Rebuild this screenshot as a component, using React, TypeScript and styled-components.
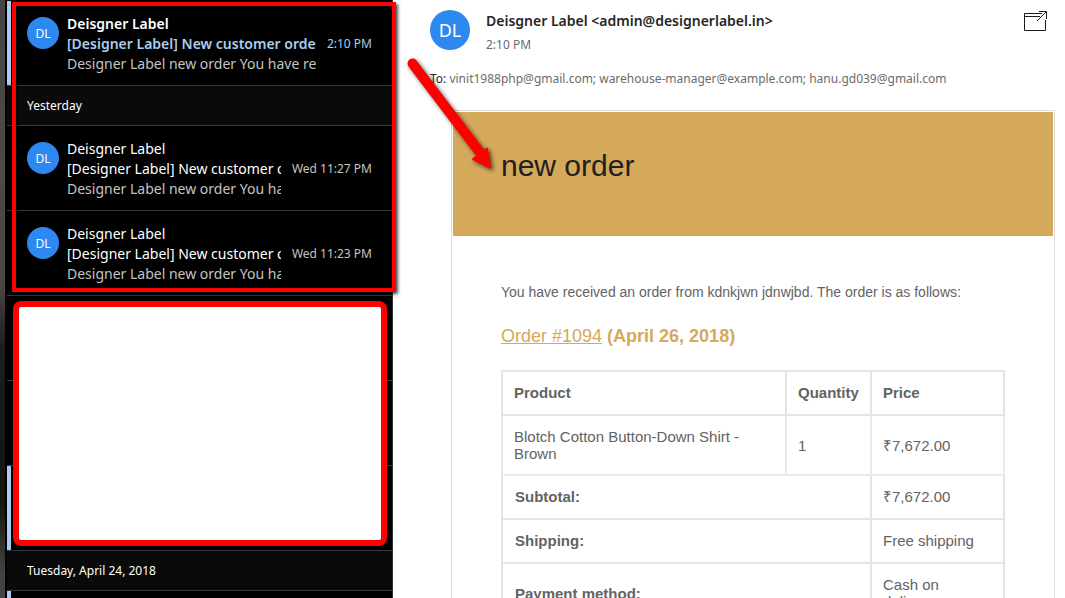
import React from "react";
import styled, { createGlobalStyle } from "styled-components";

const UI_FONT = '"Noto Sans", "Open Sans", sans-serif';
const MAIL_FONT = '"Liberation Sans", Arial, sans-serif';

const GlobalStyle = createGlobalStyle`
  *, *::before, *::after { box-sizing: border-box; }
  body { margin: 0; background: #fff; font-family: ${UI_FONT}; }
`;

const Shell = styled.div`
  position: relative;
  display: flex;
  height: 100vh;
  overflow: hidden;
`;

const Backdrop = styled.div`
  flex: 0 0 7px;
  border-right: 2px solid #000;
  background: linear-gradient(#454545, #504844 30%, #4a4442 48%, #1c1e20 58%, #141818 75%, #15160f 84%, #444 96%);
`;

const Sidebar = styled.nav`
  flex: 0 0 386px;
  padding-top: 1px;
  background: #000;
  border-right: 1px solid #333;
  overflow: hidden;
`;

const MessageList = styled.ul`
  margin: 0;
  padding: 0;
  list-style: none;
`;

const DateHeader = styled.h2`
  margin: 0;
  padding: 0 20px;
  height: 40px;
  line-height: 39px;
  border-bottom: 1px solid #383838;
  background: #0a0a0a;
  color: #fff;
  font-size: 12px;
  font-weight: 400;
`;

const Row = styled.a<{ $unread?: boolean }>`
  display: flex;
  gap: 8px;
  height: 85px;
  padding: 13px 20px 0;
  border-bottom: 1px solid #383838;
  box-shadow: inset 4px 0 ${(p) => (p.$unread ? "#a9cdf0" : "#000")};
  color: ${(p) => (p.$unread ? "#a9cdf0" : "#fff")};
  text-decoration: none;
`;

const Avatar = styled.span<{ $large?: boolean }>`
  flex: none;
  display: flex;
  align-items: center;
  justify-content: center;
  width: ${(p) => (p.$large ? 40 : 32)}px;
  height: ${(p) => (p.$large ? 40 : 32)}px;
  margin-top: ${(p) => (p.$large ? 0 : 3)}px;
  border-radius: 50%;
  background: #2d89ef;
  color: #fff;
  font-size: ${(p) => (p.$large ? 18 : 12)}px;
`;

const Summary = styled.span`
  flex: 1;
  min-width: 0;
  margin-right: 3px;
  font-size: 14px;
  line-height: 20px;
`;

const Line = styled.span<{ $bold?: boolean; $color?: string }>`
  display: block;
  overflow: hidden;
  white-space: nowrap;
  font-weight: ${(p) => (p.$bold ? 600 : 400)};
  color: ${(p) => p.$color ?? "inherit"};
`;

const RowTime = styled.time<{ $unread?: boolean }>`
  flex: none;
  padding-top: 20px;
  font-size: 12px;
  line-height: 20px;
  color: ${(p) => (p.$unread ? "#a9cdf0" : "#c4c4c4")};
`;

const Reader = styled.main`
  flex: 1;
  min-width: 0;
  padding: 10px 10px 0 37px;
  background: #fff;
`;

const ReaderHeader = styled.header`
  display: flex;
  gap: 16px;
  height: 58px;
`;

const Sender = styled.div`
  flex: 1;
  min-width: 0;
`;

const SenderName = styled.h1`
  margin: 0;
  color: #262626;
  font-size: 14px;
  font-weight: 600;
  line-height: 22px;
`;

const SentTime = styled.time`
  display: block;
  color: #6b6b6b;
  font-size: 12px;
  line-height: 26px;
`;

const OpenButton = styled.button`
  display: flex;
  align-items: flex-start;
  height: 24px;
  margin-right: 7px;
  padding: 0;
  border: 0;
  background: none;
`;

const Recipients = styled.p`
  margin: 0;
  height: 42px;
  line-height: 22px;
  font-size: 12px;
  color: #6b6b6b;
`;

const ToLabel = styled.span`
  color: #262626;
`;

const MailCard = styled.article`
  margin-left: 21px;
  padding: 1px;
  border: 1px solid #dcdcdc;
  color: #636363;
  font-family: ${MAIL_FONT};
`;

const Banner = styled.div`
  height: 124px;
  padding: 36px 48px;
  background: #d4a95a;
`;

const BannerTitle = styled.h2`
  margin: 0;
  color: #202020;
  font-size: 30px;
  font-weight: 400;
  line-height: 36px;
`;

const MailBody = styled.div`
  padding: 46px 48px 48px;
`;

const Intro = styled.p`
  margin: 0 0 22px;
  font-size: 14px;
  line-height: 21px;
`;

const OrderTitle = styled.h3`
  margin: 0 0 22px;
  color: #d4a95a;
  font-size: 18px;
  line-height: 23px;
`;

const OrderLink = styled.a`
  color: inherit;
  font-weight: 400;
`;

const OrderTable = styled.table`
  width: 100%;
  border-collapse: collapse;
  table-layout: fixed;
  font-size: 15px;
  line-height: 17px;
  text-align: left;

  th, td {
    padding: 12px 11px 13px;
    border: 2px solid #e4e4e4;
  }

  tbody td {
    padding-bottom: 12px;
    border-color: #eaeaea;
  }

  tfoot th {
    padding-left: 12px;
  }
`;

const ProductCol = styled.col``;

const QuantityCol = styled.col`
  width: 85px;
`;

const PriceCol = styled.col`
  width: 133px;
`;

const Frame = styled.div`
  position: absolute;
  top: 2px;
  left: 12px;
  width: 384px;
  height: 290px;
  border: 4px solid #f00;
  box-shadow: 2px 2px 3px rgba(0, 0, 0, 0.7), inset 2px 2px 3px rgba(0, 0, 0, 0.6);
  pointer-events: none;
`;

const Cover = styled.div`
  position: absolute;
  top: 301px;
  left: 13px;
  width: 374px;
  height: 245px;
  border: 6px solid #f00;
  border-radius: 8px;
  background: #fff;
`;

const Arrow = styled.svg`
  position: absolute;
  top: 50px;
  left: 400px;
  filter: drop-shadow(2px 2px 2px rgba(0, 0, 0, 0.65));
  pointer-events: none;
`;

interface MessageProps {
  subject?: string;
  preview?: string;
  time?: string;
  unread?: boolean;
}

function Message({ subject, preview, time, unread }: MessageProps) {
  return (
    <li>
      <Row href="#message" $unread={unread}>
        {subject && (
          <>
            <Avatar>DL</Avatar>
            <Summary>
              <Line $bold={unread} $color="#fff">Deisgner Label</Line>
              <Line $bold={unread}>{subject}</Line>
              <Line $color="#c4c4c4">{preview}</Line>
            </Summary>
            <RowTime $unread={unread}>{time}</RowTime>
          </>
        )}
      </Row>
    </li>
  );
}

export default function App() {
  return (
    <Shell>
      <GlobalStyle />
      <Backdrop />
      <Sidebar aria-label="Messages">
        <MessageList>
          <Message
            subject="[Designer Label] New customer order"
            preview="Designer Label new order You have re"
            time="2:10 PM"
            unread
          />
        </MessageList>
        <DateHeader>Yesterday</DateHeader>
        <MessageList>
          <Message
            subject="[Designer Label] New customer o"
            preview="Designer Label new order You ha"
            time="Wed 11:27 PM"
          />
          <Message
            subject="[Designer Label] New customer o"
            preview="Designer Label new order You ha"
            time="Wed 11:23 PM"
          />
          <Message />
          <Message />
          <Message unread />
        </MessageList>
        <DateHeader>Tuesday, April 24, 2018</DateHeader>
        <MessageList>
          <Message unread />
        </MessageList>
      </Sidebar>

      <Reader>
        <ReaderHeader>
          <Avatar $large>DL</Avatar>
          <Sender>
            <SenderName>Deisgner Label &lt;admin@designerlabel.in&gt;</SenderName>
            <SentTime>2:10 PM</SentTime>
          </Sender>
          <OpenButton aria-label="Open in new window">
            <svg width="25" height="22" viewBox="0 0 25 22" fill="none" stroke="#1a1a1a">
              <path d="M19 3.5H1.5V20.5H22.5V10M1 6.5H17M16 1.5H23.5V9M14 11L23 2" />
            </svg>
          </OpenButton>
        </ReaderHeader>
        <Recipients>
          <ToLabel>To:</ToLabel> vinit1988php@gmail.com; warehouse-manager@example.com; hanu.gd039@gmail.com
        </Recipients>
        <MailCard>
          <Banner>
            <BannerTitle>new order</BannerTitle>
          </Banner>
          <MailBody>
            <Intro>You have received an order from kdnkjwn jdnwjbd. The order is as follows:</Intro>
            <OrderTitle>
              <OrderLink href="#order-1094">Order #1094</OrderLink> (April 26, 2018)
            </OrderTitle>
            <OrderTable>
              <colgroup>
                <ProductCol />
                <QuantityCol />
                <PriceCol />
              </colgroup>
              <thead>
                <tr>
                  <th scope="col">Product</th>
                  <th scope="col">Quantity</th>
                  <th scope="col">Price</th>
                </tr>
              </thead>
              <tbody>
                <tr>
                  <td>Blotch Cotton Button-Down Shirt - Brown</td>
                  <td>1</td>
                  <td>₹7,672.00</td>
                </tr>
              </tbody>
              <tfoot>
                <tr>
                  <th scope="row" colSpan={2}>Subtotal:</th>
                  <td>₹7,672.00</td>
                </tr>
                <tr>
                  <th scope="row" colSpan={2}>Shipping:</th>
                  <td>Free shipping</td>
                </tr>
                <tr>
                  <th scope="row" colSpan={2}>Payment method:</th>
                  <td>Cash on delivery</td>
                </tr>
              </tfoot>
            </OrderTable>
          </MailBody>
        </MailCard>
      </Reader>

      <Frame />
      <Cover />
      <Arrow width="100" height="130" viewBox="0 0 100 130" fill="#f00" stroke="#f00" aria-hidden="true">
        <path d="M12.500 13.500L81 104" strokeWidth="10" strokeLinecap="round" />
        <path d="M73 109L90 117.500L87 98.500Z" strokeWidth="2" strokeLinejoin="round" />
      </Arrow>
    </Shell>
  );
}
